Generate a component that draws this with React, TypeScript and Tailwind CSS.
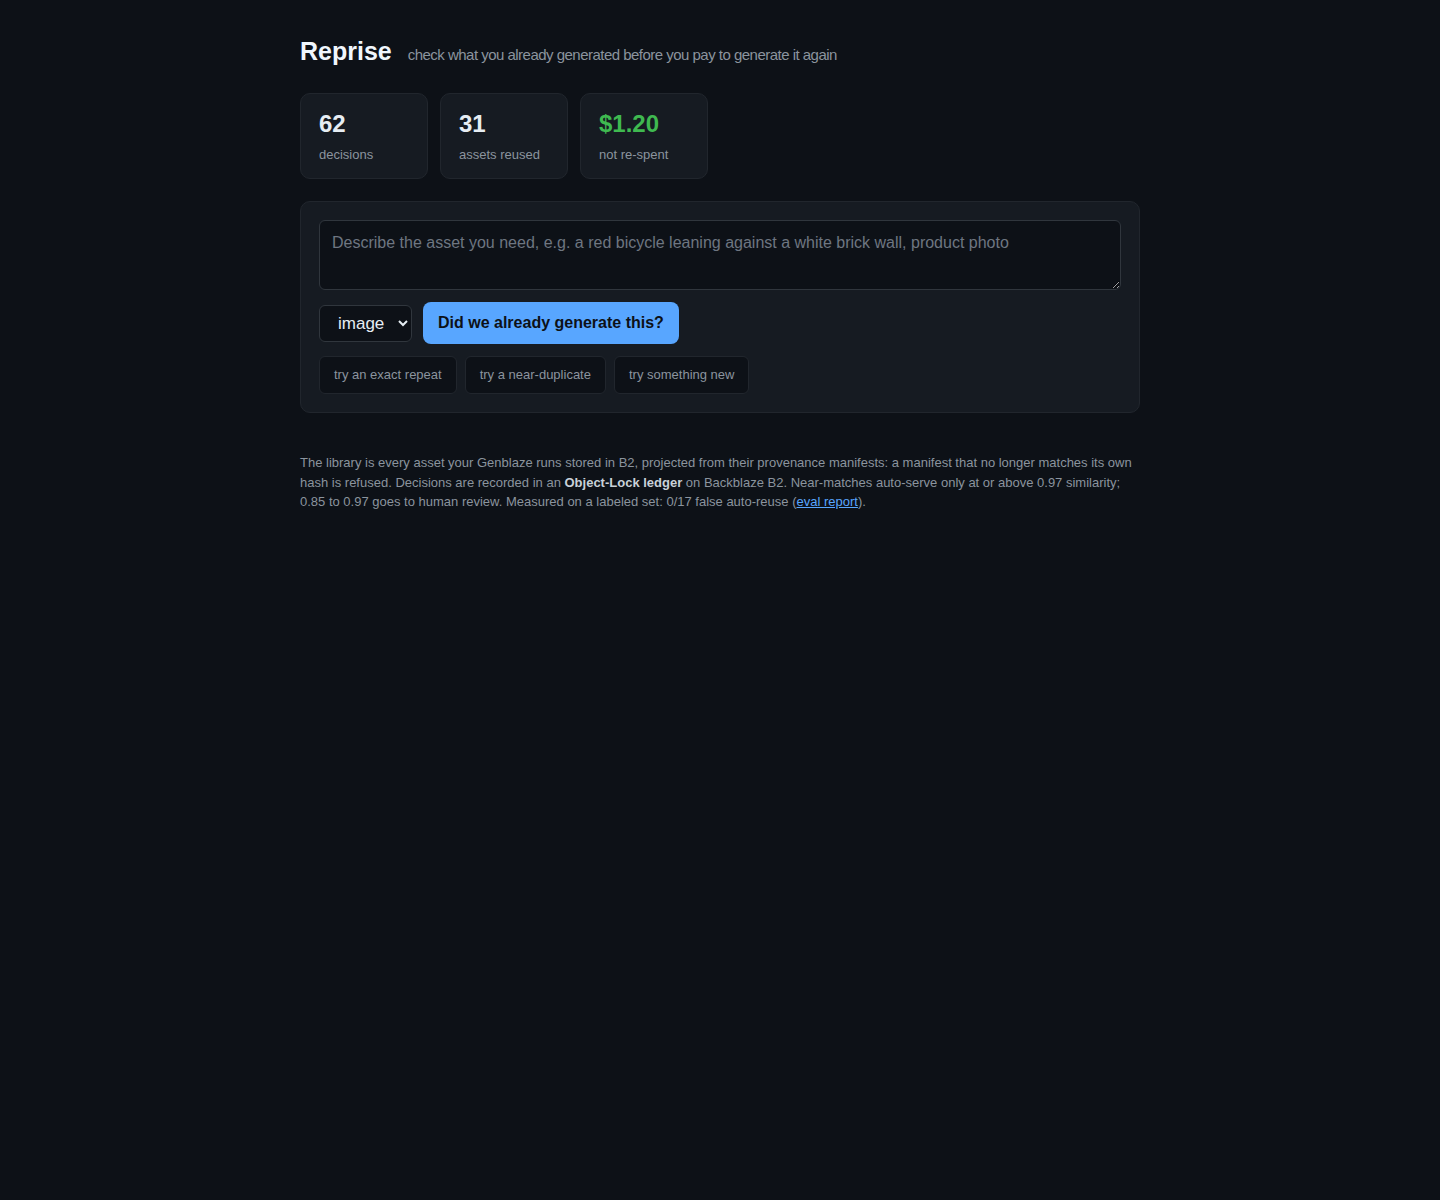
import React from 'react';

interface Stat {
  value: string;
  label: string;
  accent?: boolean;
}

const stats: Stat[] = [
  { value: '62', label: 'decisions' },
  { value: '31', label: 'assets reused' },
  { value: '$1.20', label: 'not re-spent', accent: true },
];

const samples = ['try an exact repeat', 'try a near-duplicate', 'try something new'];

const StatCard: React.FC<{ stat: Stat }> = ({ stat }) => (
  <div className="w-[128px] h-[86px] rounded-[10px] border border-[#21262d] bg-[#161b22] px-[18px] pt-[15px]">
    <div className={`text-[24px] font-bold leading-[30px] ${stat.accent ? 'text-[#3fb950]' : 'text-[#e6edf3]'}`}>
      {stat.value}
    </div>
    <div className="mt-[7px] text-[13px] leading-[18px] text-[#8b949e]">{stat.label}</div>
  </div>
);

export default function App() {
  return (
    <div className="min-h-[1200px] bg-[#0d1117] font-['Liberation_Sans',Arial,sans-serif] text-[#e6edf3]">
      <div className="mx-auto w-[840px] pt-[35px]">
        <header className="flex items-baseline gap-[16px]">
          <h1 className="text-[25px] font-bold leading-[32px] text-[#f0f6fc]">Reprise</h1>
          <span className="text-[15px] tracking-[-0.52px] text-[#8b949e]">
            check what you already generated before you pay to generate it again
          </span>
        </header>

        <div className="mt-[26px] flex gap-[12px]">
          {stats.map(s => (
            <StatCard key={s.label} stat={s} />
          ))}
        </div>

        <section className="mt-[22px] rounded-[10px] border border-[#21262d] bg-[#161b22] p-[18px]">
          <textarea
            className="block h-[70px] w-full rounded-[6px] border border-[#30363d] bg-[#0d1117] px-[12px] py-[11px] font-['Liberation_Sans',Arial,sans-serif] text-[16px] leading-[22px] text-[#e6edf3] outline-none placeholder:text-[#6e7681]"
            placeholder="Describe the asset you need, e.g. a red bicycle leaning against a white brick wall, product photo"
          />
          <div className="mt-[12px] flex items-center gap-[11px]">
            <select className="h-[37px] w-[93px] rounded-[6px] border border-[#30363d] bg-[#0d1117] pl-[14px] pr-[6px] text-[17px] text-[#e6edf3]">
              <option>image</option>
              <option>video</option>
              <option>audio</option>
            </select>
            <button className="h-[42px] rounded-[8px] bg-[#58a6ff] px-[15px] text-[16px] font-bold text-[#0d1117]">
              Did we already generate this?
            </button>
          </div>
          <div className="mt-[12px] flex gap-[8px]">
            {samples.map(s => (
              <button
                key={s}
                className="h-[38px] rounded-[6px] border border-[#21262d] bg-[#0d1117] px-[14px] text-[13px] text-[#8b949e]"
              >
                {s}
              </button>
            ))}
          </div>
        </section>

        <p className="mt-[40px] text-[13px] leading-[19.5px] text-[#8b949e]">
          The library is every asset your Genblaze runs stored in B2, projected from their provenance manifests: a
          manifest that no longer matches its own hash is refused. Decisions are recorded in an{' '}
          <b className="text-[#c9d1d9]">Object-Lock ledger</b> on Backblaze B2. Near-matches auto-serve only at or above
          0.97 similarity; 0.85 to 0.97 goes to human review. Measured on a labeled set: 0/17 false auto-reuse (
          <a href="#" className="text-[#58a6ff] underline">
            eval report
          </a>
          ).
        </p>
      </div>
    </div>
  );
}
